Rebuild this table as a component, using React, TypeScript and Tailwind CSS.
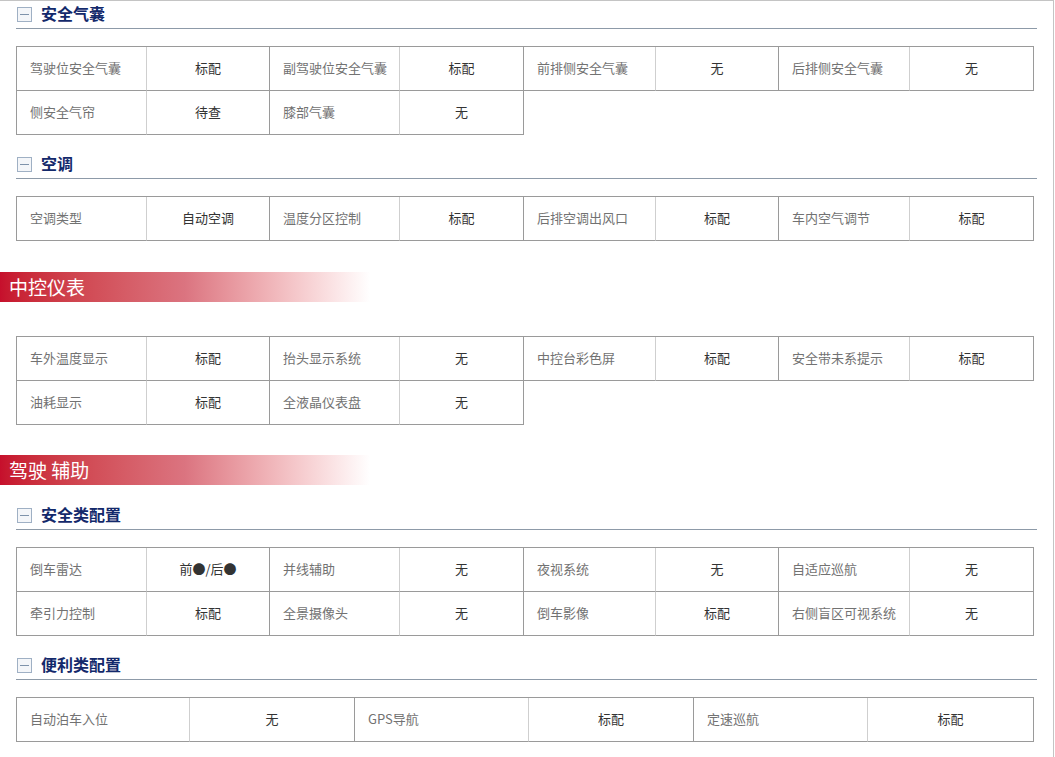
import React from 'react';

type Cell = { label: string; value: string };

const airbag: Cell[] = [
  { label: '驾驶位安全气囊', value: '标配' },
  { label: '副驾驶位安全气囊', value: '标配' },
  { label: '前排侧安全气囊', value: '无' },
  { label: '后排侧安全气囊', value: '无' },
  { label: '侧安全气帘', value: '待查' },
  { label: '膝部气囊', value: '无' },
];

const aircon: Cell[] = [
  { label: '空调类型', value: '自动空调' },
  { label: '温度分区控制', value: '标配' },
  { label: '后排空调出风口', value: '标配' },
  { label: '车内空气调节', value: '标配' },
];

const dashboard: Cell[] = [
  { label: '车外温度显示', value: '标配' },
  { label: '抬头显示系统', value: '无' },
  { label: '中控台彩色屏', value: '标配' },
  { label: '安全带未系提示', value: '标配' },
  { label: '油耗显示', value: '标配' },
  { label: '全液晶仪表盘', value: '无' },
];

const safety: Cell[] = [
  { label: '倒车雷达', value: '前●/后●' },
  { label: '并线辅助', value: '无' },
  { label: '夜视系统', value: '无' },
  { label: '自适应巡航', value: '无' },
  { label: '牵引力控制', value: '标配' },
  { label: '全景摄像头', value: '无' },
  { label: '倒车影像', value: '标配' },
  { label: '右侧盲区可视系统', value: '无' },
];

const convenience: Cell[] = [
  { label: '自动泊车入位', value: '无' },
  { label: 'GPS导航', value: '标配' },
  { label: '定速巡航', value: '标配' },
];

const SectionTitle = ({ title }: { title: string }) => (
  <div className="ml-4 w-[1021px] h-[28px] border-b border-[#8d9aa8] flex items-center pb-[3px]">
    <span className="ml-px mt-[3px] w-[15px] h-[15px] border border-[#9fb0c4] bg-[#f4f6f9] flex items-center justify-center">
      <span className="w-[9px] h-px bg-[#7f93ab]" />
    </span>
    <span className="ml-[9px] text-[16px] font-semibold text-[#13296b] leading-none">{title}</span>
  </div>
);

const Banner = ({ title }: { title: string }) => (
  <div className="h-[30px] w-[370px] bg-gradient-to-r from-[#c60f2c] via-[#db7480] to-white flex items-center pl-[9px] pb-[2px]">
    <span className="text-[19px] text-white leading-none">{title}</span>
  </div>
);

const Table = ({ cells, cols }: { cells: Cell[]; cols: number[] }) => (
  <div
    className="ml-4 w-[1018px] border-l border-t border-[#9a9a9a] grid"
    style={{ gridTemplateColumns: cols.map((c) => `${c}px`).join(' ') }}
  >
    {cells.map((c, i) => (
      <React.Fragment key={i}>
        <div className="h-11 border-r border-b border-r-[#cfcfcf] border-b-[#9a9a9a] flex items-center pl-[13px] pb-[3px] text-[13px] leading-none text-[#727272] whitespace-nowrap">
          {c.label}
        </div>
        <div className="h-11 border-r border-b border-[#9a9a9a] flex items-center justify-center pb-[3px] text-[13px] font-normal leading-none text-[#333] whitespace-nowrap">
          {c.value}
        </div>
      </React.Fragment>
    ))}
  </div>
);

const fourCols = [130, 123, 130, 124, 132, 123, 131, 124];
const threeCols = [173, 165, 174, 165, 174, 166];

export default function App() {
  return (
    <div
      className="w-[1054px] min-h-[757px] border-t border-r border-[#c4c4c4] bg-white"
      style={{ fontFamily: '"Noto Sans CJK SC", "Noto Sans", sans-serif' }}
    >
      <SectionTitle title="安全气囊" />
      <div className="mt-[17px]">
        <Table cells={airbag} cols={fourCols} />
      </div>
      <div className="mt-4">
        <SectionTitle title="空调" />
      </div>
      <div className="mt-[17px]">
        <Table cells={aircon} cols={fourCols} />
      </div>
      <div className="mt-[31px]">
        <Banner title="中控仪表" />
      </div>
      <div className="mt-[34px]">
        <Table cells={dashboard} cols={fourCols} />
      </div>
      <div className="mt-[30px]">
        <Banner title="驾驶 辅助" />
      </div>
      <div className="mt-[17px]">
        <SectionTitle title="安全类配置" />
      </div>
      <div className="mt-[17px]">
        <Table cells={safety} cols={fourCols} />
      </div>
      <div className="mt-4">
        <SectionTitle title="便利类配置" />
      </div>
      <div className="mt-[17px]">
        <Table cells={convenience} cols={threeCols} />
      </div>
    </div>
  );
}
